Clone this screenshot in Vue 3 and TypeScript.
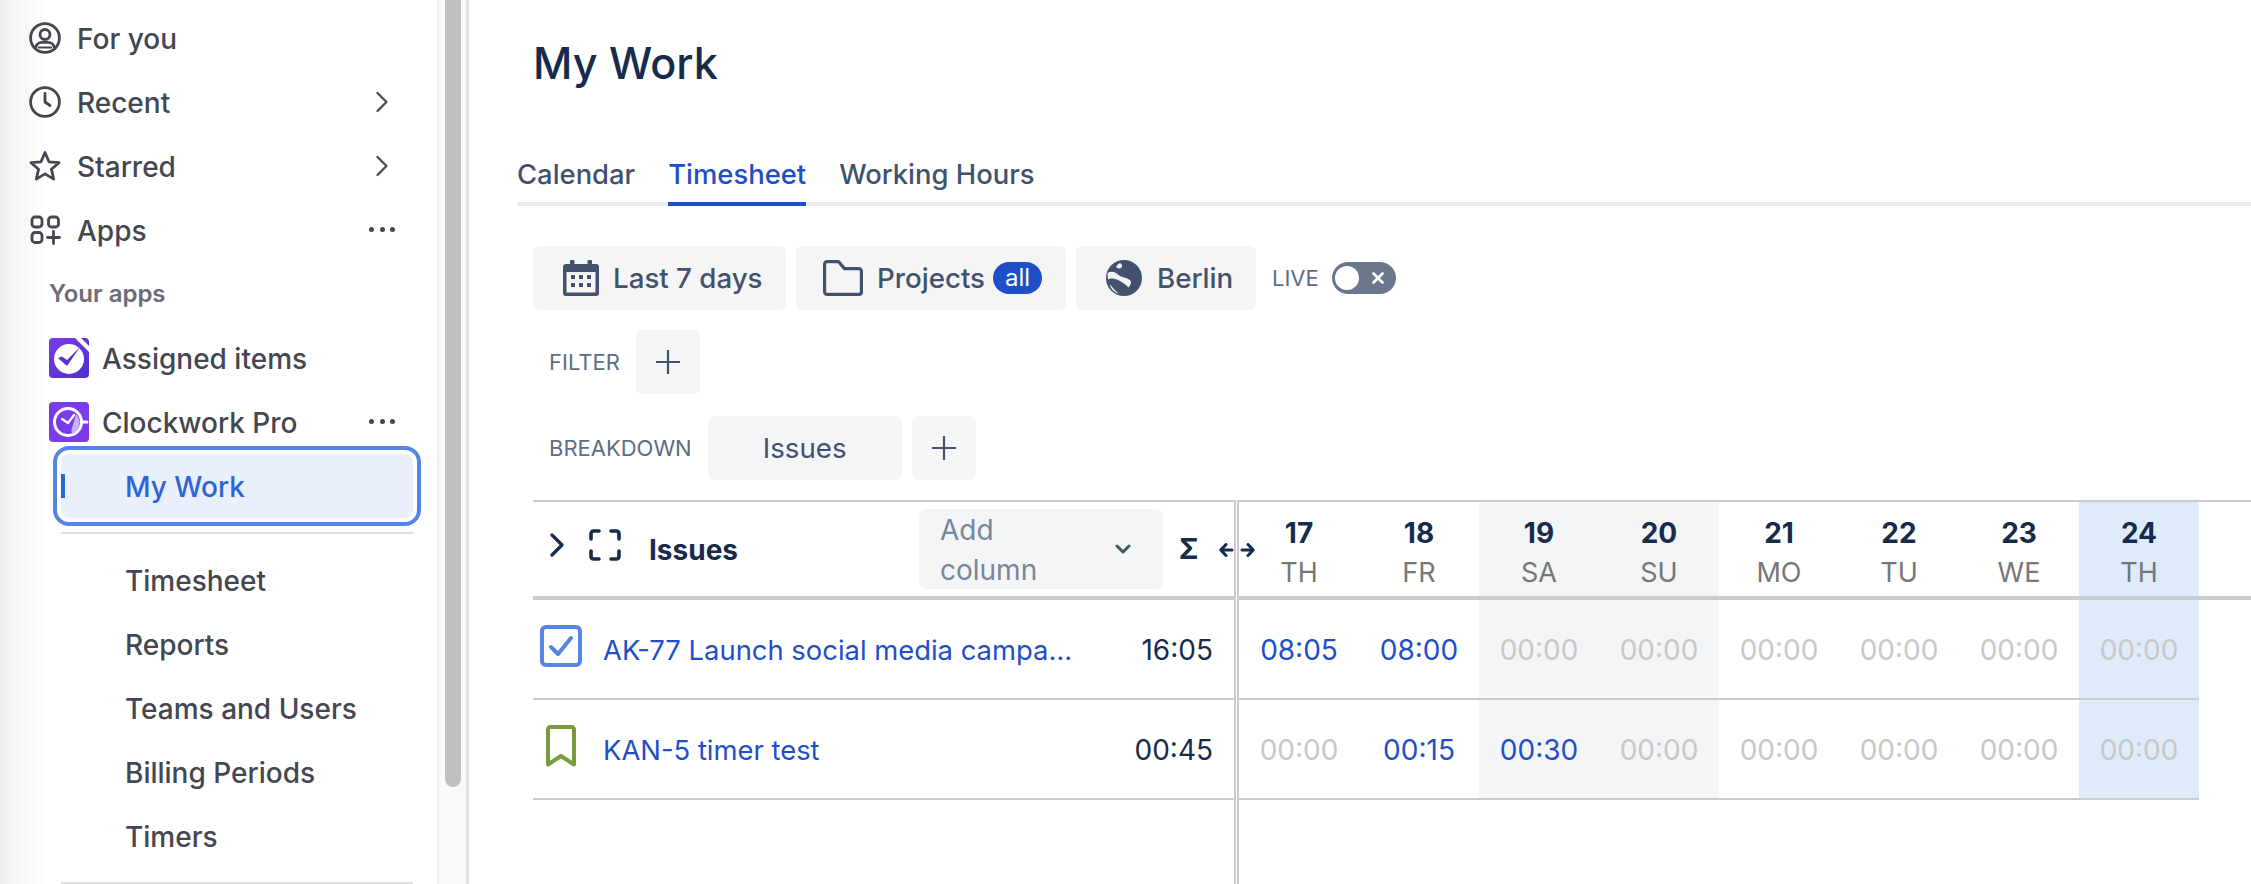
<script setup lang="ts">
type Day = { num: number; name: string; kind?: 'weekend' | 'today' };
type Row = { key: string; title: string; total: string; type: 'task' | 'story'; times: string[] };

const days: Day[] = [
  { num: 17, name: 'TH' },
  { num: 18, name: 'FR' },
  { num: 19, name: 'SA', kind: 'weekend' },
  { num: 20, name: 'SU', kind: 'weekend' },
  { num: 21, name: 'MO' },
  { num: 22, name: 'TU' },
  { num: 23, name: 'WE' },
  { num: 24, name: 'TH', kind: 'today' }
];

const rows: Row[] = [
  {
    key: 'AK-77',
    title: 'AK-77 Launch social media campaign',
    total: '16:05',
    type: 'task',
    times: ['08:05', '08:00', '00:00', '00:00', '00:00', '00:00', '00:00', '00:00']
  },
  {
    key: 'KAN-5',
    title: 'KAN-5 timer test',
    total: '00:45',
    type: 'story',
    times: ['00:00', '00:15', '00:30', '00:00', '00:00', '00:00', '00:00', '00:00']
  }
];

const subItems = ['Timesheet', 'Reports', 'Teams and Users', 'Billing Periods', 'Timers'];
</script>

<template>
  <div class="page">
    <aside class="sidebar">
      <div class="nav-row">
        <svg class="nav-icon" viewBox="0 0 32 32" fill="none" stroke="#44474f" stroke-width="2.8">
          <circle cx="16" cy="16" r="14.4" />
          <circle cx="16" cy="12.5" r="5" />
          <path d="M6.5 26c.6-3.6 3.6-5.6 6.5-5.6h6c2.9 0 5.9 2 6.5 5.6" />
          <path d="M9 25.5h14" stroke-width="2" />
        </svg>
        <span class="nav-label">For you</span>
      </div>
      <div class="nav-row">
        <svg class="nav-icon" viewBox="0 0 32 32" fill="none" stroke="#44474f" stroke-width="2.8" stroke-linecap="round" stroke-linejoin="round">
          <circle cx="16" cy="16" r="14.4" />
          <path d="M16 7.5V16l5 3.5" />
        </svg>
        <span class="nav-label">Recent</span>
        <svg class="nav-chevron" viewBox="0 0 14 22" fill="none" stroke="#44474f" stroke-width="2.2" stroke-linecap="round" stroke-linejoin="round">
          <path d="M2.5 2l9 9-9 9" />
        </svg>
      </div>
      <div class="nav-row">
        <svg class="nav-icon" viewBox="0 0 32 32" fill="none" stroke="#44474f" stroke-width="2.8" stroke-linejoin="round">
          <path d="M16 2.5l4 9.3 10 .9-7.6 6.6 2.3 9.8L16 23.9l-8.7 5.2 2.3-9.8L2 12.7l10-.9z" />
        </svg>
        <span class="nav-label">Starred</span>
        <svg class="nav-chevron" viewBox="0 0 14 22" fill="none" stroke="#44474f" stroke-width="2.2" stroke-linecap="round" stroke-linejoin="round">
          <path d="M2.5 2l9 9-9 9" />
        </svg>
      </div>
      <div class="nav-row">
        <svg class="nav-icon" viewBox="0 0 32 32" fill="none" stroke="#44474f" stroke-width="2.8" stroke-linecap="round">
          <rect x="3" y="3" width="10" height="10" rx="3" />
          <rect x="19.5" y="3" width="10" height="10" rx="3" />
          <rect x="3" y="18.5" width="10" height="10" rx="3" />
          <path d="M24.5 17.5v12M18.5 23.5h12" />
        </svg>
        <span class="nav-label">Apps</span>
        <span class="nav-dots"><i /><i /><i /></span>
      </div>

      <div class="nav-heading">Your apps</div>

      <div class="nav-row app-row">
        <svg class="app-icon" viewBox="0 0 40 40">
          <defs>
            <linearGradient id="assigned-bg" x1="0" y1="0" x2="1" y2="1">
              <stop offset="0" stop-color="#7c3aed" />
              <stop offset="1" stop-color="#4f2fc9" />
            </linearGradient>
          </defs>
          <rect width="40" height="40" rx="4" fill="url(#assigned-bg)" />
          <circle cx="20" cy="21" r="15" fill="#fff" />
          <path d="M9 20l9 8L31 9 18 22l-5-3.5z" fill="#5b2fd6" />
          <path d="M26 0h6l8 8v6z" fill="#fff" />
        </svg>
        <span class="nav-label">Assigned items</span>
      </div>
      <div class="nav-row app-row">
        <svg class="app-icon" viewBox="0 0 40 40">
          <rect width="40" height="40" rx="4" fill="#7c3aed" />
          <circle cx="19" cy="20" r="13.5" fill="none" stroke="#fff" stroke-width="3" />
          <path d="M32 20h6" stroke="#fff" stroke-width="3" stroke-linecap="round" />
          <path d="M13 17l6 4 6-8" fill="none" stroke="#fff" stroke-width="2.2" stroke-linecap="round" stroke-linejoin="round" />
          <path d="M27 12a13 13 0 0 1-3 20c-3-3-1-6 0-9s2-7 3-11z" fill="#c9b3f5" />
        </svg>
        <span class="nav-label">Clockwork Pro</span>
        <span class="nav-dots"><i /><i /><i /></span>
      </div>

      <div class="sub-row active">
        <span class="active-bar" />
        My Work
      </div>
      <div class="divider" />
      <div v-for="item in subItems" :key="item" class="sub-row">{{ item }}</div>
      <div class="divider" />
    </aside>

    <div class="scroll-track"><div class="scroll-thumb" /></div>

    <main class="main">
      <h1 class="title">My Work</h1>

      <div class="tabs">
        <span class="tab">Calendar</span>
        <span class="tab selected">Timesheet</span>
        <span class="tab">Working Hours</span>
      </div>

      <div class="toolbar">
        <div class="tool-row first">
          <button class="btn range">
            <svg class="btn-icon" viewBox="0 0 36 36">
              <path d="M8 0h2.5a1 1 0 0 1 1 1v3h13V1a1 1 0 0 1 1-1H28a1 1 0 0 1 1 1v3h4a3 3 0 0 1 3 3v26a3 3 0 0 1-3 3H3a3 3 0 0 1-3-3V7a3 3 0 0 1 3-3h4V1a1 1 0 0 1 1-1zM3.5 12v20.5h29V12z" fill="#42526e" />
              <g fill="#42526e">
                <rect x="8" y="15" width="4" height="4" />
                <rect x="16" y="15" width="4" height="4" />
                <rect x="24" y="15" width="4" height="4" />
                <rect x="8" y="23" width="4" height="4" />
                <rect x="16" y="23" width="4" height="4" />
                <rect x="24" y="23" width="4" height="4" />
              </g>
            </svg>
            Last 7 days
          </button>
          <button class="btn projects">
            <svg class="btn-icon folder" viewBox="0 0 40 36" fill="none" stroke="#42526e" stroke-width="3.2" stroke-linejoin="round">
              <path d="M1.6 4A2.4 2.4 0 0 1 4 1.6h11.5l6 7H36A2.4 2.4 0 0 1 38.4 11v21a2.4 2.4 0 0 1-2.4 2.4H4A2.4 2.4 0 0 1 1.6 32z" />
            </svg>
            Projects
            <span class="pill">all</span>
          </button>
          <button class="btn city">
            <svg class="btn-icon" viewBox="0 0 36 36">
              <circle cx="18" cy="18" r="18" fill="#42526e" />
              <path d="M1.5 13C6 10.5 10 12.5 12.5 15c3 2.5 8 2.5 11.5 5 2 2.5.5 5-1.5 7.500-2.500-2.500-6-5.500-10.500-7.500-4-1.500-7.500-2-10-.500z" fill="#f4f4f4" />
              <path d="M3.5 24c2.500 2.500 5 6 9 9.500-4-1-7.500-4.500-9-9.500z" fill="#f4f4f4" />
              <path d="M14 3c1.500 1 3 2.500 1.500 4.500-1.500 1.500-4 1-5.500-.5 1-1.800 2.500-3.300 4-4z" fill="#f4f4f4" />
            </svg>
            Berlin
          </button>
          <span class="tool-label live">LIVE</span>
          <span class="toggle">
            <span class="knob" />
            <svg class="toggle-x" viewBox="0 0 12 12" fill="none" stroke="#fff" stroke-width="2.6" stroke-linecap="round">
              <path d="M1.5 1.5l9 9M10.5 1.5l-9 9" />
            </svg>
          </span>
        </div>
        <div class="tool-row filter">
          <span class="tool-label">FILTER</span>
          <button class="btn square">
            <svg class="plus" viewBox="0 0 26 26" fill="none" stroke="#42526e" stroke-width="2.2"><path d="M13 1v24M1 13h24" /></svg>
          </button>
        </div>
        <div class="tool-row breakdown">
          <span class="tool-label">BREAKDOWN</span>
          <button class="btn issues">Issues</button>
          <button class="btn square">
            <svg class="plus" viewBox="0 0 26 26" fill="none" stroke="#42526e" stroke-width="2.2"><path d="M13 1v24M1 13h24" /></svg>
          </button>
        </div>
      </div>

      <div class="table">
        <div class="left-pane">
          <div class="head-row">
            <svg class="expand" viewBox="0 0 14 24" fill="none" stroke="#172b4d" stroke-width="3.2" stroke-linecap="round" stroke-linejoin="round">
              <path d="M2 2l10 10L2 22" />
            </svg>
            <svg class="focus" viewBox="0 0 32 32" fill="none" stroke="#172b4d" stroke-width="3.6" stroke-linecap="round" stroke-linejoin="round">
              <path d="M10 2H4.5A2.5 2.5 0 0 0 2 4.5V10M22 2h5.5A2.5 2.5 0 0 1 30 4.5V10M10 30H4.5A2.5 2.5 0 0 1 2 27.5V22M22 30h5.500a2.500 2.500 0 0 0 2.500-2.500V22" />
            </svg>
            <span class="head-title">Issues</span>
            <div class="add-col">
              <span class="add-text">Add column</span>
              <svg class="add-chevron" viewBox="0 0 16 10" fill="none" stroke="#42526e" stroke-width="3" stroke-linecap="round" stroke-linejoin="round">
                <path d="M2 2l6 6 6-6" />
              </svg>
            </div>
            <span class="sigma">Σ</span>
            <svg class="resize" viewBox="0 0 36 14" fill="none" stroke="#172b4d" stroke-width="3" stroke-linecap="round" stroke-linejoin="round">
              <path d="M7 1.5L1.7 7 7 12.5M2 7h11M29 1.5L34.3 7 29 12.5M34 7H23" />
            </svg>
          </div>
          <div v-for="row in rows" :key="row.key" class="issue-row">
            <svg v-if="row.type === 'task'" class="issue-icon" viewBox="0 0 42 42" fill="none">
              <rect x="2" y="2" width="38" height="38" rx="4" stroke="#5484e4" stroke-width="4" />
              <path d="M11 22l7 7 13-16" stroke="#5484e4" stroke-width="4" stroke-linecap="round" stroke-linejoin="round" />
            </svg>
            <svg v-else class="issue-icon story" viewBox="0 0 42 42" fill="none">
              <path d="M8 39.5V4.5A2.5 2.5 0 0 1 10.5 2h21A2.5 2.5 0 0 1 34 4.5v35L21 31z" stroke="#789b3c" stroke-width="4" stroke-linejoin="round" />
            </svg>
            <span class="issue-title">{{ row.title }}</span>
            <span class="issue-total">{{ row.total }}</span>
          </div>
        </div>

        <div class="pane-sep" />

        <div class="right-pane">
          <div class="day-head">
            <div v-for="d in days" :key="d.num" class="day-col" :class="d.kind">
              <span class="day-num">{{ d.num }}</span>
              <span class="day-name">{{ d.name }}</span>
            </div>
          </div>
          <div v-for="row in rows" :key="row.key" class="time-row">
            <div
              v-for="(t, i) in row.times"
              :key="i"
              class="time-cell"
              :class="[days[i].kind, { empty: t === '00:00' }]"
            >
              {{ t }}
            </div>
          </div>
        </div>
      </div>
    </main>
  </div>
</template>

<style>
html,
body {
  margin: 0;
  background: #fff;
}
</style>

<style scoped>
.page {
  display: flex;
  width: 2251px;
  height: 884px;
  overflow: hidden;
  font-family: Inter, 'Liberation Sans', sans-serif;
  background: #fff;
}

.sidebar {
  width: 437px;
  flex: none;
  padding-top: 6px;
  box-sizing: border-box;
  background: linear-gradient(90deg, #f0f0f0, #fff 48px);
  color: #44474f;
}
.nav-row {
  display: flex;
  align-items: center;
  height: 64px;
  padding-left: 29px;
  position: relative;
}
.nav-icon {
  width: 32px;
  height: 32px;
  margin-right: 16px;
}
.nav-label {
  padding-top: 2px;
  font-size: 28px;
  font-weight: 500;
}
.nav-chevron {
  position: absolute;
  left: 375px;
  top: 21px;
  width: 14px;
  height: 22px;
}
.nav-dots {
  position: absolute;
  left: 369px;
  top: 29px;
  display: flex;
  gap: 5.5px;
}
.nav-dots i {
  width: 5px;
  height: 5px;
  border-radius: 50%;
  background: #44474f;
}
.nav-heading {
  height: 64px;
  line-height: 64px;
  padding-left: 49px;
  font-size: 24px;
  font-weight: 600;
  color: #6b6e76;
}
.app-row {
  padding-left: 49px;
}
.app-icon {
  width: 40px;
  height: 40px;
  margin-right: 13px;
}
.sub-row {
  height: 64px;
  line-height: 66px;
  margin: 0 24px 0 61px;
  padding-left: 64px;
  font-size: 28px;
  font-weight: 500;
  position: relative;
}
.sub-row.active {
  background: #e9f0fc;
  color: #2d65d6;
  border-radius: 8px;
  outline: 4px solid #5484e4;
  outline-offset: 4px;
}
.active-bar {
  position: absolute;
  left: 0;
  top: 20px;
  width: 4px;
  height: 24px;
  background: #2d65d6;
}
.divider {
  height: 2px;
  margin: 14px 24px 14px 61px;
  background: #e0e0e0;
}

.scroll-track {
  width: 32px;
  flex: none;
  box-sizing: border-box;
  padding-left: 6px;
  background: #fafafa;
  border-left: 2px solid #eeeeee;
  border-right: 3px solid #e4e4e4;
}
.scroll-thumb {
  width: 16px;
  height: 787px;
  background: #bfbfbf;
  border-radius: 0 0 8px 8px;
}

.main {
  flex: 1;
  min-width: 0;
  display: flex;
  flex-direction: column;
}
.title {
  margin: 39px 0 67px 64px;
  height: 48px;
  line-height: 48px;
  font-size: 43.2px;
  font-weight: 500;
  color: #172b4d;
}
.tabs {
  display: flex;
  gap: 33px;
  margin-left: 48px;
  border-bottom: 4px solid #ebecf0;
}
.tab {
  line-height: 40px;
  padding-bottom: 8px;
  margin-bottom: -4px;
  border-bottom: 4px solid transparent;
  font-size: 27.4px;
  font-weight: 500;
  color: #42526e;
}
.tab.selected {
  color: #1f4fc8;
  border-bottom-color: #1f4fc8;
}

.toolbar {
  margin: 40px 0 20px 64px;
  display: flex;
  flex-direction: column;
}
.tool-row {
  display: flex;
  align-items: center;
  gap: 10px;
  height: 64px;
}
.tool-row.filter {
  margin-top: 20px;
  padding-left: 16px;
  gap: 16px;
}
.tool-row.breakdown {
  margin-top: 22px;
  padding-left: 16px;
}
.tool-row.breakdown .tool-label {
  margin-right: 6px;
}
.btn {
  display: flex;
  align-items: center;
  height: 64px;
  padding: 0;
  border: 0;
  border-radius: 6px;
  background: #f5f5f5;
  font-family: inherit;
  font-size: 27.7px;
  font-weight: 500;
  color: #42526e;
}
.btn-icon {
  width: 36px;
  height: 36px;
  flex: none;
}
.range {
  width: 253px;
  padding-left: 30px;
  gap: 14px;
}
.projects {
  width: 270px;
  padding-left: 27px;
  gap: 14px;
}
.folder {
  width: 40px;
}
.pill {
  margin-left: -6px;
  width: 49px;
  height: 32px;
  line-height: 31px;
  border-radius: 16px;
  background: #1f4fc8;
  color: #fff;
  font-size: 24px;
  font-weight: 400;
  text-align: center;
}
.city {
  width: 180px;
  padding-left: 30px;
  gap: 15px;
}
.tool-label {
  font-size: 22px;
  font-weight: 400;
  color: #5e6c84;
}
.tool-label.live {
  margin-left: 6px;
  margin-right: 3px;
}
.toggle {
  position: relative;
  display: block;
  width: 64px;
  height: 32px;
  border-radius: 16px;
  background: #6b778c;
}
.knob {
  position: absolute;
  left: 3px;
  top: 4px;
  width: 24px;
  height: 24px;
  border-radius: 50%;
  background: #fff;
}
.toggle-x {
  position: absolute;
  left: 40px;
  top: 10px;
  width: 12px;
  height: 12px;
}
.square {
  width: 64px;
  justify-content: center;
  background: #f4f5f7;
}
.plus {
  width: 26px;
  height: 26px;
}
.issues {
  width: 194px;
  justify-content: center;
  font-weight: 400;
  background: #f4f5f7;
}

.table {
  flex: 1;
  display: flex;
  margin-left: 64px;
  min-height: 0;
}
.left-pane {
  width: 701px;
  flex: none;
  color: #172b4d;
}
.head-row {
  position: relative;
  display: flex;
  align-items: center;
  height: 94px;
  border-top: 2px solid #ccc;
  border-bottom: 4px solid #ccc;
  padding-left: 17px;
}
.expand {
  width: 14px;
  height: 24px;
  margin: -8px 25px 0 0;
}
.focus {
  width: 32px;
  height: 32px;
  margin: -8px 28px 0 0;
}
.head-title {
  width: 270px;
  padding-top: 2px;
  font-size: 28px;
  font-weight: 700;
}
.add-col {
  display: flex;
  align-items: center;
  justify-content: space-between;
  box-sizing: border-box;
  width: 244px;
  height: 80px;
  padding: 0 32px 0 21px;
  border-radius: 8px;
  background: #f4f5f7;
  font-size: 28px;
  line-height: 40px;
  color: #7a869a;
}
.add-text {
  width: 130px;
  padding-top: 2px;
}
.add-chevron {
  width: 16px;
  height: 10px;
  flex: none;
}
.sigma {
  margin-left: 16px;
  font-size: 28px;
  font-weight: 700;
}
.resize {
  position: absolute;
  left: 686px;
  top: 41px;
  width: 36px;
  height: 14px;
}
.issue-row {
  display: flex;
  align-items: center;
  height: 98px;
  border-bottom: 2px solid #ccc;
  padding-left: 7px;
  font-size: 27.4px;
}
.issue-icon {
  width: 42px;
  height: 42px;
  flex: none;
  margin: -6px 21px 0 0;
}
.issue-title {
  width: 472px;
  padding-top: 2px;
  overflow: hidden;
  white-space: nowrap;
  text-overflow: ellipsis;
  color: #1f4fc8;
}
.issue-total {
  flex: 1;
  margin-right: 21px;
  padding-top: 2px;
  font-size: 28px;
  text-align: right;
}
.pane-sep {
  width: 1px;
  flex: none;
  border-left: 2px solid #ccc;
  border-right: 2px solid #ccc;
}
.right-pane {
  flex: 1;
  min-width: 0;
}
.day-head {
  display: flex;
  border-top: 2px solid #ccc;
  border-bottom: 4px solid #ccc;
}
.day-col {
  display: flex;
  flex-direction: column;
  align-items: center;
  width: 120px;
  height: 94px;
  padding-top: 11px;
  box-sizing: border-box;
  line-height: 40px;
}
.day-num {
  font-size: 28px;
  font-weight: 700;
  color: #172b4d;
}
.day-name {
  font-size: 27px;
  font-weight: 400;
  color: #777;
}
.time-row {
  display: flex;
  width: 960px;
  border-bottom: 2px solid #ccc;
}
.time-cell {
  width: 120px;
  height: 98px;
  line-height: 100px;
  text-align: center;
  font-size: 28px;
  color: #1f4fc8;
}
.time-cell.empty {
  color: #c8c8c8;
}
.weekend {
  background: #f4f5f7;
}
.today {
  background: #deebfb;
}
</style>
